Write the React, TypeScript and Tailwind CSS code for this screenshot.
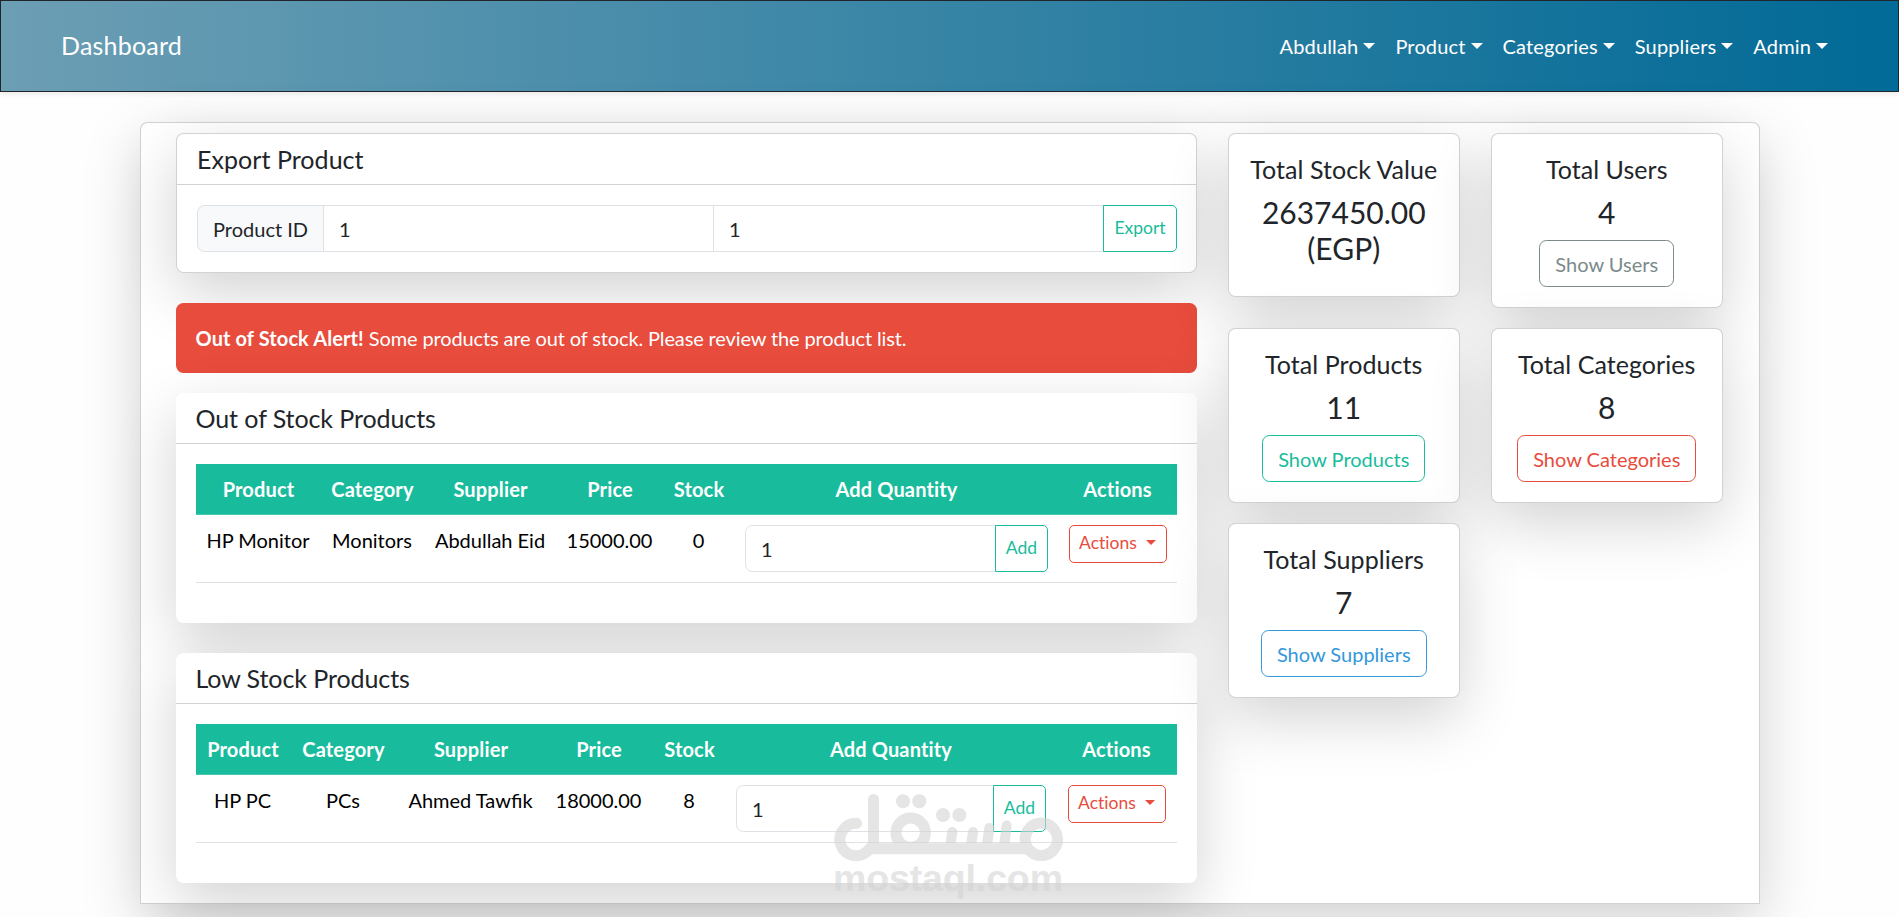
import React from "react";

interface Product {
  name: string;
  category: string;
  supplier: string;
  price: string;
  stock: number;
}

interface ProductTableProps {
  title: string;
  products: Product[];
  widths: number[];
}

interface StatCardProps {
  title: string;
  value: string;
  button?: string;
  color?: string;
}

const menus = ["Abdullah", "Product", "Categories", "Suppliers", "Admin"];

const headings = ["Product", "Category", "Supplier", "Price", "Stock", "Add Quantity", "Actions"];

const outOfStock: Product[] = [
  { name: "HP Monitor", category: "Monitors", supplier: "Abdullah Eid", price: "15000.00", stock: 0 },
];

const lowStock: Product[] = [
  { name: "HP PC", category: "PCs", supplier: "Ahmed Tawfik", price: "18000.00", stock: 8 },
];

const Caret: React.FC<{ className: string }> = ({ className }) => (
  <span
    className={`inline-block border-t-current border-x-transparent border-b-0 border-solid ${className}`}
  />
);

const Navbar: React.FC = () => (
  <nav className="relative flex h-[92px] items-center justify-between border border-[#212529] bg-linear-to-r/srgb from-[#6c9eb4] to-[#036b97] to-98% pl-[60px] pr-[60px] text-white shadow-[0_2.5px_5px_rgba(0,0,0,0.075)]">
    <a href="#" className="pb-[2px] text-[25px] leading-[37px] tracking-[0.2px]">
      Dashboard
    </a>
    <ul className="flex">
      {menus.map((menu) => (
        <li key={menu} className="px-[10px]">
          <a href="#" className="whitespace-nowrap tracking-[0.15px]">
            {menu}
            <Caret className="ml-[5px] align-[5px] border-t-[6px] border-x-[6px]" />
          </a>
        </li>
      ))}
    </ul>
  </nav>
);

const ExportProduct: React.FC = () => (
  <div className="relative mb-[30px] rounded-[7.5px] border border-black/17.5 bg-white shadow-[0_20px_60px_rgba(0,0,0,0.175)]">
    <div className="border-b border-black/17.5 px-5 py-[10px]">
      <h5 className="text-[25px] leading-[30px] tracking-[0.05px]">Export Product</h5>
    </div>
    <div className="py-5 pl-5 pr-[19px]">
      <div className="flex h-[47px]">
        <span className="flex w-[127px] items-center rounded-l-[7.5px] border border-[#dee2e6] bg-[#f8f9fa] pl-[15px]">
          Product ID
        </span>
        <input
          className="-ml-px min-w-0 flex-1 border border-[#dee2e6] bg-white px-[15px]"
          defaultValue="1"
        />
        <input
          className="-ml-px min-w-0 flex-1 border border-[#dee2e6] bg-white px-[15px]"
          defaultValue="1"
        />
        <button className="relative -ml-px w-[74px] rounded-r-[5px] border border-[#18bc9c] pb-[2px] text-[17.5px] text-[#18bc9c]">
          Export
        </button>
      </div>
    </div>
  </div>
);

const ProductTable: React.FC<ProductTableProps> = ({ title, products, widths }) => (
  <div className="relative rounded-[7.5px] bg-white shadow-[0_20px_60px_rgba(0,0,0,0.175)]">
    <div className="border-b border-black/17.5 px-5 py-[10px]">
      <h5 className="-ml-[0.5px] text-[25px] leading-[30px] tracking-[-0.08px]">{title}</h5>
    </div>
    <div className="p-5">
      <table className="mb-5 w-full table-fixed border-separate border-spacing-0 text-center text-black">
        <colgroup>
          {widths.map((width, i) => (
            <col key={i} style={{ width }} />
          ))}
        </colgroup>
        <thead>
          <tr className="h-[51px] bg-[#18bc9c] text-white">
            {headings.map((heading) => (
              <th key={heading} className="border-b border-[#46c9b0] p-0 font-bold tracking-[0.15px]">
                {heading}
              </th>
            ))}
          </tr>
        </thead>
        <tbody>
          {products.map((product) => (
            <tr
              key={product.name}
              className="h-[68px] align-top whitespace-nowrap [&>td]:border-b [&>td]:border-[#dee2e6]"
            >
              <td className="pt-[10px] pr-px">{product.name}</td>
              <td className="pt-[10px] pr-px">{product.category}</td>
              <td className="pt-[10px] pr-px">{product.supplier}</td>
              <td className="pt-[10px] pr-px">{product.price}</td>
              <td className="pt-[10px] pr-px">{product.stock}</td>
              <td className="px-[10px] pt-[10px]">
                <div className="flex h-[47px]">
                  <input
                    className="min-w-0 flex-1 rounded-l-[7.5px] border border-[#dee2e6] bg-white px-[15px] text-[#212529]"
                    defaultValue="1"
                  />
                  <button className="relative -ml-px rounded-r-[5px] border border-[#18bc9c] px-[10px] pb-px text-[17.5px] text-[#18bc9c]">
                    Add
                  </button>
                </div>
              </td>
              <td className="pt-[10px]">
                <button className="h-[38px] w-[98px] rounded-[5px] border border-[#e74c3c] pb-[2px] text-[17.5px] leading-[26px] tracking-[0.02px] text-[#e74c3c]">
                  Actions
                  <Caret className="ml-[9px] align-[4.5px] border-t-[5px] border-x-[5px]" />
                </button>
              </td>
            </tr>
          ))}
        </tbody>
      </table>
    </div>
  </div>
);

const StatCard: React.FC<StatCardProps> = ({ title, value, button, color }) => (
  <div className="relative self-start rounded-[7.5px] border border-black/17.5 bg-white px-4 py-5 text-center shadow-[0_20px_60px_rgba(0,0,0,0.175)]">
    <h5 className="mb-[10px] text-[25px] leading-[30px] tracking-[0.06px] whitespace-nowrap">{title}</h5>
    <h4 className="mb-[10px] text-[30px] leading-[36px]">{value}</h4>
    {button && (
      <button className={`h-[47px] rounded-[7.5px] border px-[15px] ${color}`}>{button}</button>
    )}
  </div>
);

// Logo stamp in the lower part of the page
const Watermark: React.FC = () => (
  <svg
    className="pointer-events-none absolute left-[834px] top-[792px]"
    width="230"
    height="110"
    viewBox="0 0 230 110"
    opacity="0.6"
  >
    <g fill="none" stroke="#d4d4d4" strokeWidth="11" strokeLinecap="round" strokeLinejoin="round">
      <path d="M22.5 31.3 A16.2 16.2 0 1 0 33 59.5 L39.5 53 V7.5 M37 56.7 H193 L197 59.5" />
      <circle cx="76.7" cy="40.7" r="14.7" />
      <circle cx="207.3" cy="47.3" r="16.2" />
      <path
        d="M118.3 40 L116 55 M139 40 L136.7 55 M155.3 36 L152.7 55 M172.7 33.5 L170 55"
        strokeWidth="10"
      />
    </g>
    <g fill="#d4d4d4">
      <circle cx="69" cy="9.3" r="7" />
      <circle cx="85.3" cy="9.3" r="7" />
      <circle cx="109" cy="23" r="7" />
      <circle cx="125.3" cy="23" r="7" />
    </g>
    <text
      x="-1"
      y="98.5"
      fill="#d4d4d4"
      fontSize="37.5"
      fontWeight="700"
      fontFamily="Liberation Sans, sans-serif"
      textLength="230"
    >
      mostaql.com
    </text>
  </svg>
);

const App: React.FC = () => {
  return (
    <div className="relative h-[917px] overflow-hidden bg-[#fefefe] font-['Lato',sans-serif] text-[20px] leading-[30px] text-[#212529]">
      <Navbar />
      <main className="relative mx-auto mt-[30px] flex w-[1620px] gap-[30.5px] rounded-t-[7.5px] border border-black/17.5 bg-white pl-[35.5px] pt-[10px] pb-5 shadow-[0_20px_60px_rgba(0,0,0,0.175)]">
        <div className="w-[1021px] shrink-0">
          <ExportProduct />
          <div className="relative mb-5 rounded-[7.5px] bg-[#e74c3c] py-5 pl-[19.5px] tracking-[-0.13px] text-white">
            <strong className="font-bold tracking-[0.1px]">Out of Stock Alert!</strong> Some products are out of
            stock. Please review the product list.
          </div>
          <div className="flex flex-col gap-[30px]">
            <ProductTable
              title="Out of Stock Products"
              products={outOfStock}
              widths={[125, 103, 133, 106, 72, 323, 119]}
            />
            <ProductTable
              title="Low Stock Products"
              products={lowStock}
              widths={[94, 107, 148, 108, 73, 330, 121]}
            />
          </div>
        </div>
        <div className="grid w-[495.5px] grid-cols-2 content-start gap-x-[30.5px] gap-y-5">
          <StatCard title="Total Stock Value" value="2637450.00 (EGP)" />
          <StatCard
            title="Total Users"
            value="4"
            button="Show Users"
            color="border-[#7b8a8b] text-[#7b8a8b]"
          />
          <StatCard
            title="Total Products"
            value="11"
            button="Show Products"
            color="border-[#18bc9c] text-[#18bc9c]"
          />
          <StatCard
            title="Total Categories"
            value="8"
            button="Show Categories"
            color="border-[#e74c3c] text-[#e74c3c]"
          />
          <StatCard
            title="Total Suppliers"
            value="7"
            button="Show Suppliers"
            color="border-[#3498db] text-[#3498db]"
          />
        </div>
      </main>
      <Watermark />
    </div>
  );
};

export default App;
